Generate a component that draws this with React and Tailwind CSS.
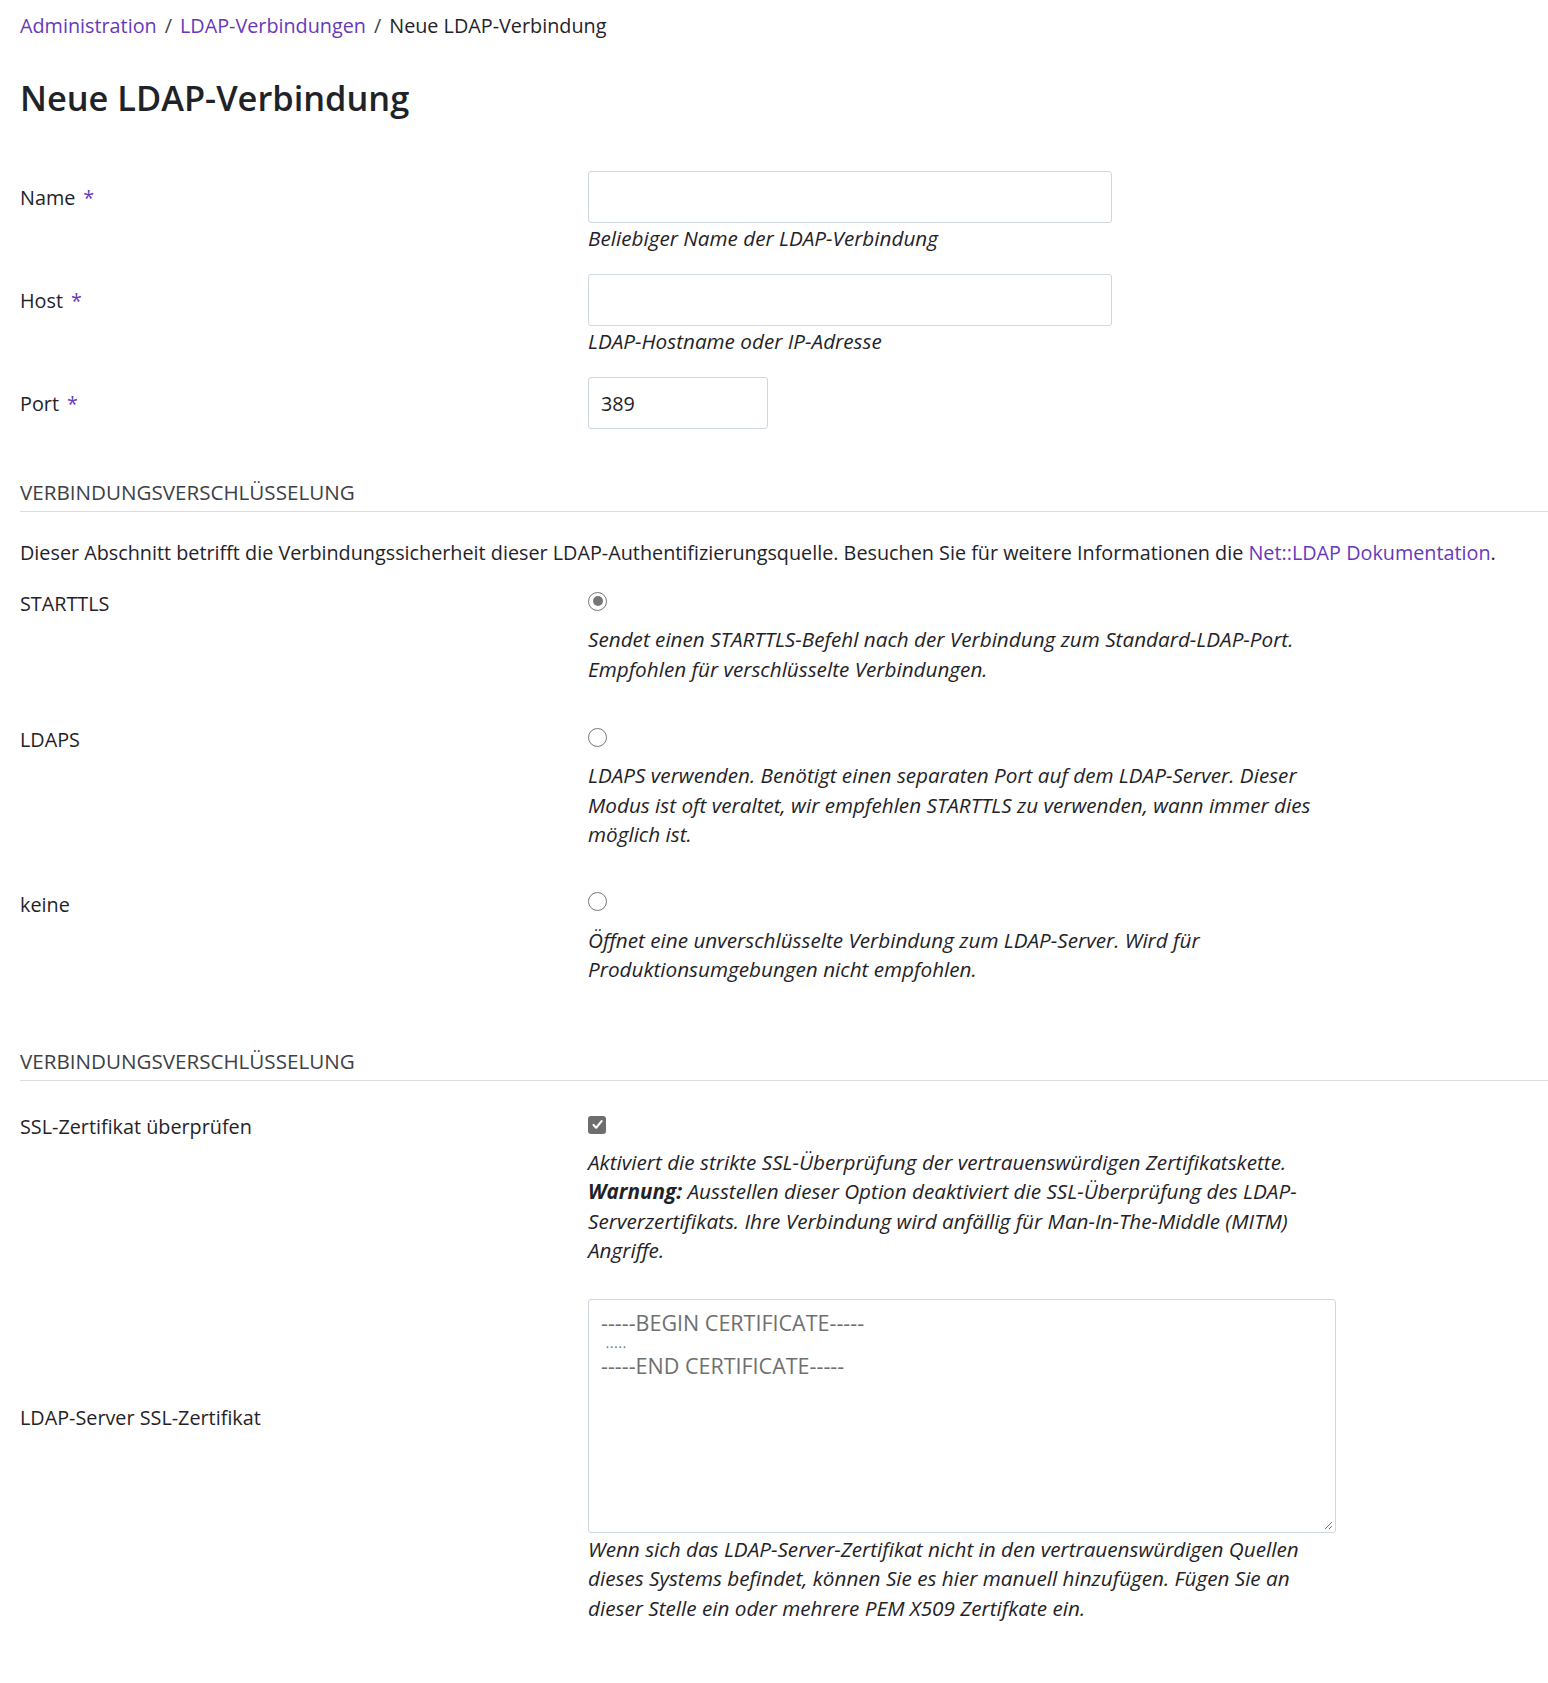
import React from "react";

function Req() {
  return <span className="ml-[8px] text-[#6639ba]">*</span>;
}

function Help({ children, className = "" }) {
  return (
    <p className={"whitespace-nowrap text-[20.7px] italic leading-[29.5px] text-[#1f2328] " + className}>{children}</p>
  );
}

function InputRow({ label, required, inputClass, value, help, className = "" }) {
  return (
    <div className={"flex " + className}>
      <div className="flex h-[52px] w-[568px] shrink-0 items-center pt-[2px]">
        <span>{label}</span>
        {required && <Req />}
      </div>
      <div>
        <div
          className={
            "flex h-[52px] items-center rounded-[3px] border border-[#d0d7de] bg-white pl-[12px] pt-[2px] " +
            inputClass
          }
        >
          {value}
        </div>
        {help && <Help className="mt-[1px]">{help}</Help>}
      </div>
    </div>
  );
}

function Radio({ checked }) {
  return (
    <span className="relative flex h-[19px] w-[19px] items-center justify-center rounded-full border-[1.5px] border-[#767676] bg-white">
      {checked && <span className="h-[10px] w-[10px] rounded-full bg-[#767676]" />}
    </span>
  );
}

function RadioRow({ label, checked, lines, className = "" }) {
  return (
    <div className={"flex " + className}>
      <div className="w-[568px] shrink-0 pt-[1px] leading-[30px]">{label}</div>
      <div>
        <div className="flex h-[26px] items-center">
          <Radio checked={checked} />
        </div>
        <Help className="mt-[11px]">
          {lines.map((l, i) => (
            <React.Fragment key={i}>
              {i > 0 && <br />}
              {l}
            </React.Fragment>
          ))}
        </Help>
      </div>
    </div>
  );
}

function SectionHeader({ children, className = "" }) {
  return (
    <div className={"border-b border-[#d8dee4] pb-[4px] " + className}>
      <h3 className="pt-[1px] text-[20.6px] font-medium uppercase leading-[30px] text-[#3d4147]">{children}</h3>
    </div>
  );
}

export default function App() {
  return (
    <div className="min-h-[1683px] bg-white pl-[20px] pt-[11px] font-['Open_Sans',sans-serif] text-[19.8px] text-[#1f2328]">
      <nav className="leading-[30px]">
        <a className="text-[#6639ba]">Administration</a>
        <span className="mx-[8px] text-[#444]">/</span>
        <a className="text-[#6639ba]">LDAP-Verbindungen</a>
        <span className="mx-[8px] text-[#444]">/</span>
        <span>Neue LDAP-Verbindung</span>
      </nav>

      <h1 className="mt-[36px] text-[34.4px] font-semibold leading-[42px] text-[#1f2328]">Neue LDAP-Verbindung</h1>

      <div className="mt-[52px]">
        <InputRow label="Name" required inputClass="w-[524px]" help="Beliebiger Name der LDAP-Verbindung" />
        <InputRow
          className="mt-[20px]"
          label="Host"
          required
          inputClass="w-[524px]"
          help="LDAP-Hostname oder IP-Adresse"
        />
        <InputRow className="mt-[21px]" label="Port" required inputClass="w-[180px]" value="389" />
      </div>

      <SectionHeader className="mt-[47px]">Verbindungsverschlüsselung</SectionHeader>

      <p className="mt-[26px] whitespace-nowrap leading-[30px]">
        Dieser Abschnitt betrifft die Verbindungssicherheit dieser LDAP-Authentifizierungsquelle. Besuchen Sie für
        weitere Informationen die <a className="text-[#6639ba]">Net::LDAP Dokumentation</a>.
      </p>

      <RadioRow
        className="mt-[20px]"
        label="STARTTLS"
        checked
        lines={[
          "Sendet einen STARTTLS-Befehl nach der Verbindung zum Standard-LDAP-Port.",
          "Empfohlen für verschlüsselte Verbindungen.",
        ]}
      />
      <RadioRow
        className="mt-[40px]"
        label="LDAPS"
        lines={[
          "LDAPS verwenden. Benötigt einen separaten Port auf dem LDAP-Server. Dieser",
          "Modus ist oft veraltet, wir empfehlen STARTTLS zu verwenden, wann immer dies",
          "möglich ist.",
        ]}
      />
      <RadioRow
        className="mt-[39px]"
        label="keine"
        lines={[
          "Öffnet eine unverschlüsselte Verbindung zum LDAP-Server. Wird für",
          "Produktionsumgebungen nicht empfohlen.",
        ]}
      />

      <SectionHeader className="mt-[60px]">Verbindungsverschlüsselung</SectionHeader>

      <div className="mt-[30px] flex">
        <div className="w-[568px] shrink-0 pt-[1px] leading-[30px]">SSL-Zertifikat überprüfen</div>
        <div>
          <div className="flex h-[28px] items-center">
            <span className="flex h-[18px] w-[18px] items-center justify-center rounded-[3px] bg-[#6e6e6e]">
              <svg viewBox="0 0 12 12" className="h-[13px] w-[13px]">
                <path
                  d="M2.3 6.4 L4.8 9 L9.8 2.8"
                  fill="none"
                  stroke="white"
                  strokeWidth="1.9"
                  strokeLinecap="round"
                  strokeLinejoin="round"
                />
              </svg>
            </span>
          </div>
          <Help className="mt-[9px]">
            Aktiviert die strikte SSL-Überprüfung der vertrauenswürdigen Zertifikatskette.
            <br />
            <strong className="font-bold">Warnung:</strong> Ausstellen dieser Option deaktiviert die SSL-Überprüfung des
            LDAP-
            <br />
            Serverzertifikats. Ihre Verbindung wird anfällig für Man-In-The-Middle (MITM)
            <br />
            Angriffe.
          </Help>
        </div>
      </div>

      <div className="mt-[33px] flex">
        <div className="flex h-[234px] w-[568px] shrink-0 items-center pt-[4px] leading-[30px]">
          LDAP-Server SSL-Zertifikat
        </div>
        <div>
          <div className="relative h-[234px] w-[748px] rounded-[3px] border border-[#d0d7de] bg-white pl-[12px] pt-[12px] text-[21.5px] leading-[21.5px] text-[#6f6f6f]">
            <div>-----BEGIN CERTIFICATE-----</div>
            <div className="flex h-[21.5px] items-center pl-[5px]">
              <span className="text-[10px] font-bold leading-[14px] tracking-[1.4px]">.....</span>
            </div>
            <div>-----END CERTIFICATE-----</div>
            <svg viewBox="0 0 10 10" className="absolute bottom-[2px] right-[2px] h-[10px] w-[10px]">
              <path d="M9 2 L2 9 M9 6 L6 9" stroke="#777" strokeWidth="1" fill="none" />
            </svg>
          </div>
          <Help className="mt-[2px]">
            Wenn sich das LDAP-Server-Zertifikat nicht in den vertrauenswürdigen Quellen
            <br />
            dieses Systems befindet, können Sie es hier manuell hinzufügen. Fügen Sie an
            <br />
            dieser Stelle ein oder mehrere PEM X509 Zertifkate ein.
          </Help>
        </div>
      </div>
    </div>
  );
}
